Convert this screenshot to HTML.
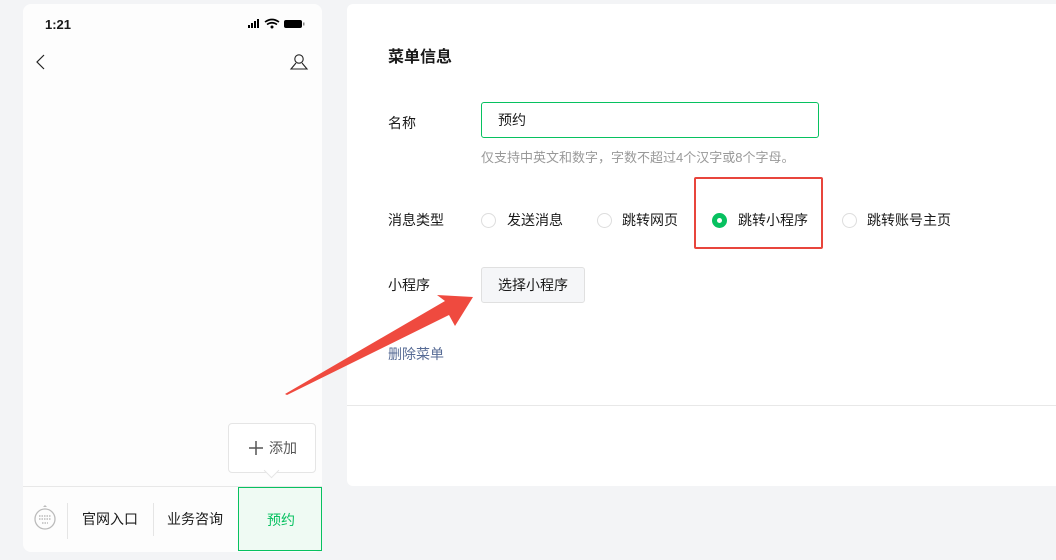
<!DOCTYPE html>
<html><head><meta charset="utf-8"><style>
body{margin:0;width:1056px;height:560px;background:#f3f4f6;font-family:"Liberation Sans","Noto Sans CJK SC",sans-serif;position:relative;overflow:hidden;color:#1a1a1a}
.a{position:absolute}
.phone{left:23px;top:4px;width:299px;height:548px;background:#fdfdfd;border-radius:8px}
.panel{left:347px;top:4px;width:720px;height:482px;background:#fff;border-radius:6px}
.t{font-size:14px;white-space:nowrap;line-height:16px}
.radio{width:15px;height:15px;border:1px solid #ddd;border-radius:50%;box-sizing:border-box;background:#fff}
</style></head><body>
<div class="a phone"></div>
<div class="a t" style="left:45px;top:17px;font-size:13px;font-weight:bold">1:21</div>
<svg class="a" style="left:247px;top:18px" width="60" height="12">
<rect x="1" y="7" width="2" height="3" fill="#000"/><rect x="4" y="5" width="2" height="5" fill="#000"/><rect x="7" y="3" width="2" height="7" fill="#000"/><rect x="10" y="1" width="2" height="9" fill="#000"/>
<path d="M18 4 Q25 -1 32 4 M20 6.5 Q25 3 30 6.5" stroke="#000" stroke-width="1.6" fill="none"/><circle cx="25" cy="9" r="1.5" fill="#000"/>
<rect x="37" y="2" width="18" height="8" rx="2" fill="#000"/><rect x="56" y="4.5" width="1.5" height="3" fill="#888"/>
</svg>
<svg class="a" style="left:34px;top:53px" width="14" height="18"><path d="M10 2 L3 9 L10 16" stroke="#222" stroke-width="1.2" fill="none"/></svg>
<svg class="a" style="left:289px;top:52px" width="20" height="20"><circle cx="10" cy="7" r="4.2" stroke="#222" stroke-width="1.1" fill="none"/><path d="M7 11 L2 17 H18 L13 11" stroke="#222" stroke-width="1.1" fill="none"/></svg>
<div class="a" style="left:228px;top:423px;width:86px;height:48px;border:1px solid #e5e5e5;border-radius:4px;background:#fff"></div>
<div class="a" style="left:266px;top:465px;width:10px;height:10px;background:#fff;border-right:1px solid #e5e5e5;border-bottom:1px solid #e5e5e5;transform:rotate(45deg)"></div>
<svg class="a" style="left:248px;top:440px" width="16" height="16"><path d="M8 1V15M1 8H15" stroke="#555" stroke-width="1.5"/></svg>
<div class="a t" style="left:269px;top:440px;color:#555">添加</div>
<div class="a" style="left:23px;top:486px;width:299px;height:1px;background:#e8e8e8"></div>
<svg class="a" style="left:33px;top:504px" width="24" height="30"><path d="M10 3 L12 1 L14 3Z" fill="#bbb"/><circle cx="12" cy="15" r="10" stroke="#bbb" stroke-width="1.3" fill="none"/><path d="M6 12h12M6 15h12M9 19h6" stroke="#bbb" stroke-width="1.6" stroke-dasharray="1.5 1"/></svg>
<div class="a" style="left:67px;top:503px;width:1px;height:36px;background:#e5e5e5"></div>
<div class="a t" style="left:82px;top:511px">官网入口</div>
<div class="a" style="left:153px;top:503px;width:1px;height:33px;background:#e5e5e5"></div>
<div class="a t" style="left:167px;top:511px">业务咨询</div>
<div class="a" style="left:238px;top:487px;width:84px;height:64px;border:1px solid #07c160;box-sizing:border-box;background:#effaf3"></div>
<div class="a t" style="left:267px;top:512px;color:#07c160">预约</div>

<div class="a panel"></div>
<div class="a" style="left:347px;top:405px;width:709px;height:1px;background:#e8e8e8"></div>
<div class="a t" style="left:388px;top:49px;font-size:16px;font-weight:bold;line-height:18px">菜单信息</div>
<div class="a t" style="left:388px;top:115px">名称</div>
<div class="a" style="left:481px;top:102px;width:338px;height:36px;border:1px solid #07c160;box-sizing:border-box;border-radius:3px"></div>
<div class="a t" style="left:498px;top:112px">预约</div>
<div class="a t" style="left:481px;top:150px;color:#999;font-size:13px">仅支持中英文和数字，字数不超过4个汉字或8个字母。</div>
<div class="a t" style="left:388px;top:212px">消息类型</div>
<div class="a radio" style="left:481px;top:213px"></div><div class="a t" style="left:507px;top:212px">发送消息</div>
<div class="a radio" style="left:597px;top:213px"></div><div class="a t" style="left:622px;top:212px">跳转网页</div>
<div class="a" style="left:712px;top:213px;width:15px;height:15px;border-radius:50%;background:#07c160"></div><div class="a" style="left:717px;top:218px;width:5px;height:5px;border-radius:50%;background:#fff"></div>
<div class="a t" style="left:738px;top:212px">跳转小程序</div>
<div class="a radio" style="left:842px;top:213px"></div><div class="a t" style="left:867px;top:212px">跳转账号主页</div>
<div class="a" style="left:694px;top:177px;width:129px;height:72px;border:2.5px solid #e8453c;box-sizing:border-box;border-radius:2px"></div>
<div class="a t" style="left:388px;top:277px">小程序</div>
<div class="a" style="left:481px;top:267px;width:104px;height:36px;border:1px solid #e0e0e0;box-sizing:border-box;border-radius:3px;background:#f5f6f8"></div>
<div class="a t" style="left:498px;top:277px">选择小程序</div>
<div class="a t" style="left:388px;top:346px;color:#576b95">删除菜单</div>
<svg class="a" style="left:0;top:0" width="1056" height="560"><polygon points="285,394 445,301 437,295 473,297 455,326 449,315 287,395" fill="#ef4a3f"/></svg>
</body></html>
